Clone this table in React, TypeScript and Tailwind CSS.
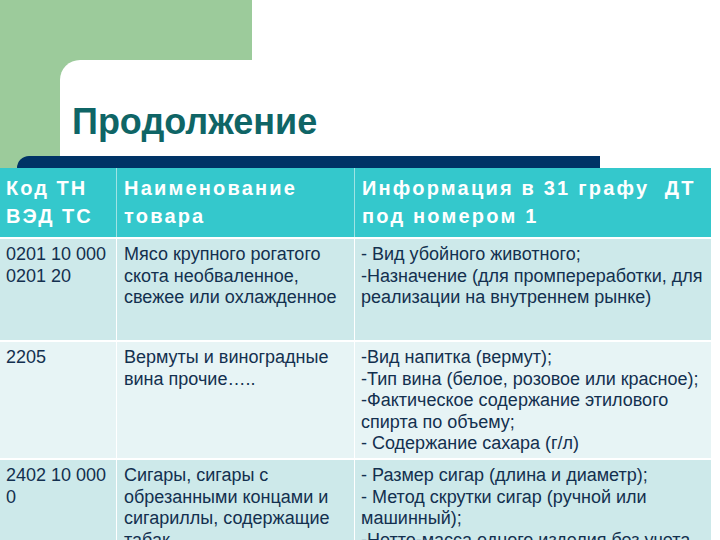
import React from "react";

const green = "bg-[#9ccb9b]";

function Lines({ lines }: { lines: string[] }) {
  return (
    <>
      {lines.map((l, i) => (
        <div key={i} className="whitespace-pre">
          {l}
        </div>
      ))}
    </>
  );
}

type Row = { h: string; bg: string; c1: string[]; c2: string[]; c3: string[] };

const rows: Row[] = [
  {
    h: "h-[103px]",
    bg: "bg-[#cde9ea]",
    c1: ["0201 10 000", "0201 20"],
    c2: ["Мясо крупного рогатого", "скота необваленное,", "свежее или охлажденное"],
    c3: [
      "- Вид убойного животного;",
      "-Назначение (для промпереработки, для",
      "реализации на внутреннем рынке)",
    ],
  },
  {
    h: "h-[118px]",
    bg: "bg-[#e7f4f5]",
    c1: ["2205"],
    c2: ["Вермуты и виноградные", "вина прочие….."],
    c3: [
      "-Вид напитка (вермут);",
      "-Тип вина (белое, розовое или красное);",
      "-Фактическое содержание этилового",
      "спирта по объему;",
      "- Содержание сахара (г/л)",
    ],
  },
  {
    h: "h-[110px]",
    bg: "bg-[#cde9ea]",
    c1: ["2402 10 000", "0"],
    c2: ["Сигары, сигары с", "обрезанными концами и", "сигариллы, содержащие", "табак"],
    c3: [
      "- Размер сигар (длина и диаметр);",
      "- Метод скрутки сигар (ручной или",
      "машинный);",
      "-Нетто-масса одного изделия без учета",
    ],
  },
];

export default function App() {
  return (
    <div
      className="w-[720px] h-[540px] overflow-hidden bg-white"
      style={{ fontFamily: '"Liberation Sans", Arial, sans-serif' }}
    >
      <div className={`h-[60px] w-[252px] ${green}`} />
      <div className={`flex h-[96px] pl-[60px] ${green}`}>
        <div className="flex-1 bg-white rounded-tl-[20px] pt-[42px] pl-[12px]">
          <div className="text-[36px] leading-[40px] font-bold text-[#0f6566]">Продолжение</div>
        </div>
      </div>
      <div className="h-[12px] bg-[linear-gradient(to_right,#9ccb9b_60px,#ffffff_60px)]">
        <div className="ml-[17px] w-[583px] h-[12px] bg-[#003366] rounded-tl-[12px]" />
      </div>
      <div className="w-[711px] bg-white">
        <div className="flex h-[71px] bg-[#34c8cc] text-white font-bold text-[20px] leading-[28px] tracking-[2.2px] border-b-2 border-white">
          <div className="w-[117px] pl-[6px] pt-[6px] border-r border-[#9fe3e4] tracking-[2px]">
            <Lines lines={["Код ТН", "ВЭД ТС"]} />
          </div>
          <div className="w-[238px] pl-[7px] pt-[6px] border-r border-[#9fe3e4]">
            <Lines lines={["Наименование", "товара"]} />
          </div>
          <div className="flex-1 pl-[7px] pt-[6px]">
            <Lines lines={["Информация в 31 графу  ДТ", "под номером 1"]} />
          </div>
        </div>
        {rows.map((r, i) => (
          <div
            key={i}
            className={`flex ${r.h} ${r.bg} text-[#13304f] text-[18px] leading-[21.5px] border-b-2 border-white`}
          >
            <div className="w-[117px] pl-[6px] pt-[5px] border-r border-white">
              <Lines lines={r.c1} />
            </div>
            <div className="w-[238px] pl-[7px] pt-[5px] border-r border-white">
              <Lines lines={r.c2} />
            </div>
            <div className="flex-1 pl-[6px] pt-[5px]">
              <Lines lines={r.c3} />
            </div>
          </div>
        ))}
      </div>
    </div>
  );
}
